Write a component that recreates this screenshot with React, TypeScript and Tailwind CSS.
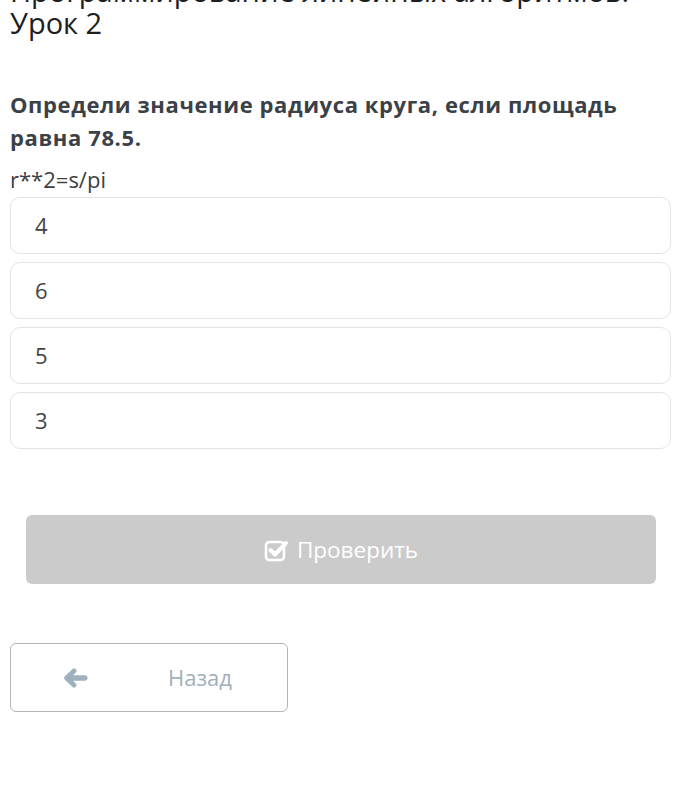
import { useState } from "react";

const answers = ["4", "6", "5", "3"];

function CheckSquareIcon() {
  return (
    <svg width="25" height="24" viewBox="0 0 25 24" fill="none">
      <rect x="2" y="4" width="18" height="18" rx="3.5" stroke="white" strokeWidth="2.6" />
      <path d="M6.5 12l4.5 4.5L22 5" stroke="white" strokeWidth="4" strokeLinecap="round" strokeLinejoin="round" />
    </svg>
  );
}

function ArrowIcon() {
  return (
    <svg width="25" height="20" viewBox="0 0 25 20" fill="#9fb1bd">
      <path d="M9.3 1.2a2.4 2.4 0 0 1 3.4 3.4L10.2 7.3h11.6a2.6 2.6 0 0 1 0 5.4H10.2l2.5 2.7a2.4 2.4 0 0 1-3.4 3.4L1.9 11.7a2.4 2.4 0 0 1 0-3.4z" />
    </svg>
  );
}

function App() {
  const [selected, setSelected] = useState<number | null>(null);

  return (
    <div className="min-h-[792px] overflow-hidden bg-white px-[10px] font-['Open_Sans',sans-serif]">
      <h1 className="-mt-[25px] text-[29px] leading-[32px] text-[#1e1e1e]">
        Программирование линейных алгоритмов. Урок 2
      </h1>

      <p className="mt-[49px] text-[22px] font-bold leading-[33px] tracking-[0.6px] text-[#3b4147]">
        Определи значение радиуса круга, если площадь равна 78.5.
      </p>

      <p className="mt-[11px] text-[22px] leading-[28px] text-[#404040]">
        r**2=s/pi
      </p>

      <div className="mt-[4px] flex w-[661px] flex-col gap-[8px]">
        {answers.map((a, i) => (
          <button
            key={a}
            onClick={() => setSelected(i)}
            className={
              "flex h-[57px] items-center rounded-[10px] border px-[24px] text-left text-[22px] text-[#444] " +
              (selected === i ? "border-[#9fb1bd]" : "border-[#e3e3e3]")
            }
          >
            {a}
          </button>
        ))}
      </div>

      <button className="ml-[16px] mt-[66px] flex h-[69px] w-[630px] items-center justify-center gap-[8px] rounded-[6px] bg-[#cbcbcb] text-[22.5px] text-white">
        <CheckSquareIcon />
        Проверить
      </button>

      <button className="mt-[59px] flex h-[69px] w-[278px] items-center rounded-[6px] border border-[#b4b4b4] text-[22px] text-[#a0b0ba]">
        <span className="ml-[52px]">
          <ArrowIcon />
        </span>
        <span className="ml-[80px]">Назад</span>
      </button>
    </div>
  );
}

export default App;
